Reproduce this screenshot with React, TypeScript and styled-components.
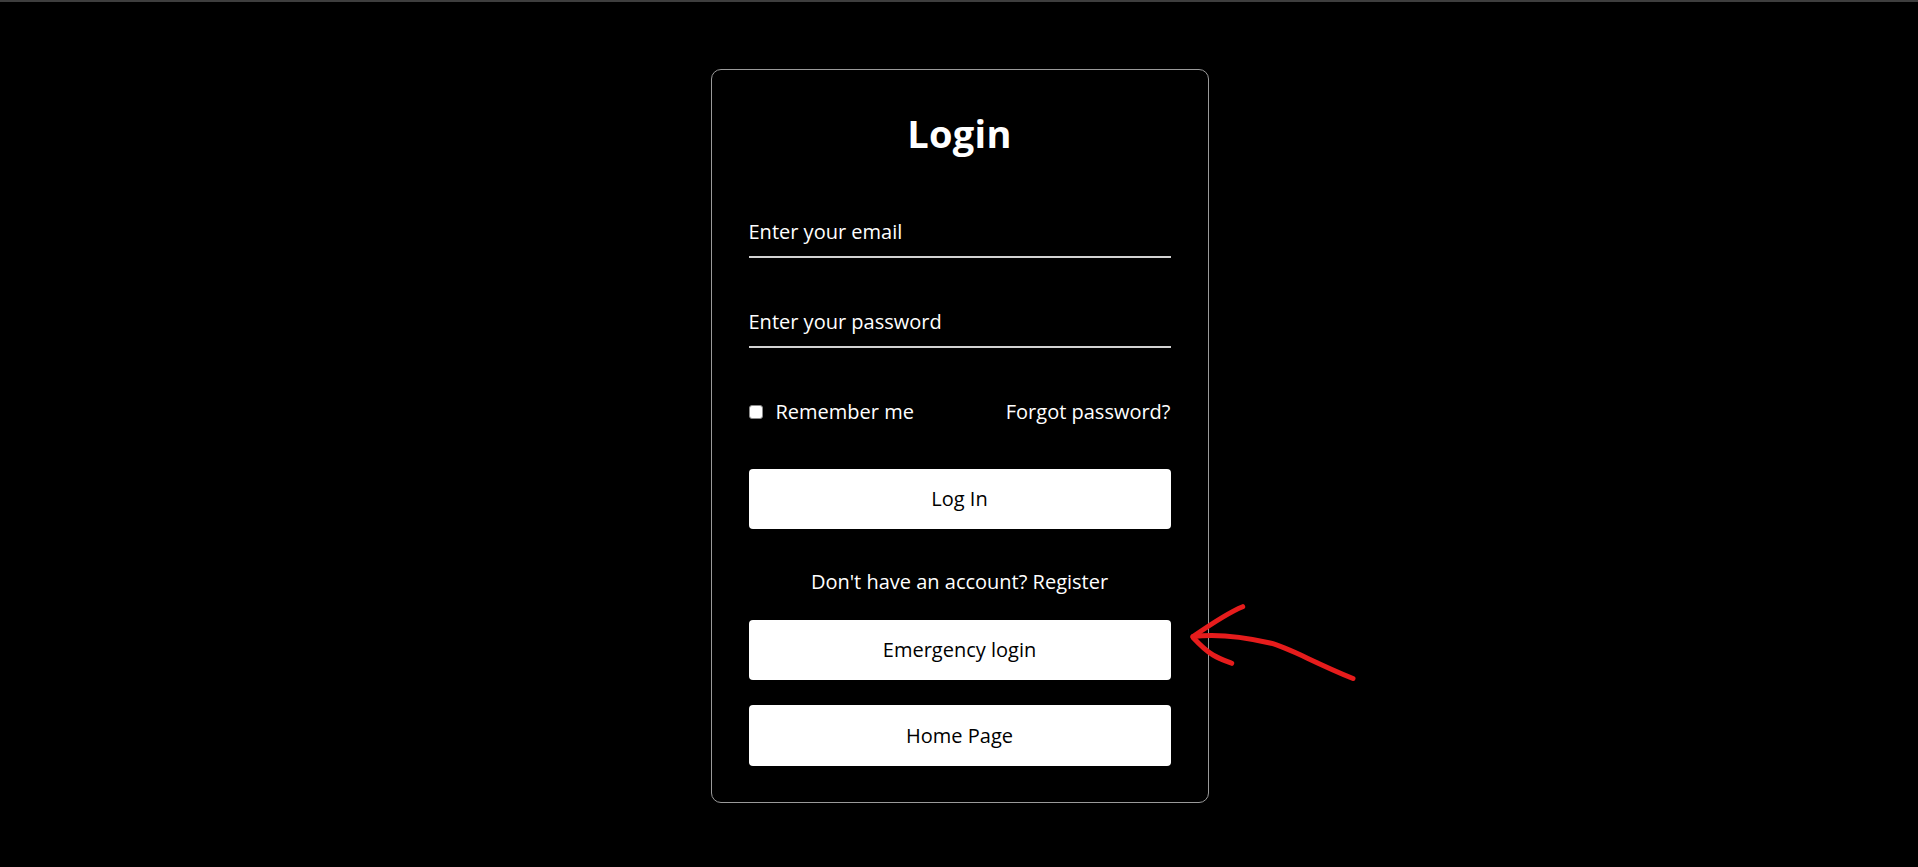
import React, { useState } from 'react';
import styled, { createGlobalStyle } from 'styled-components';

const GlobalStyle = createGlobalStyle`
  html, body {
    margin: 0;
    padding: 0;
    background: #000;
    font-family: 'Open Sans', 'Liberation Sans', sans-serif;
    color: #fff;
  }
  * {
    box-sizing: border-box;
  }
`;

export default function App() {
  const [remember, setRemember] = useState(false);

  return (
    <Page>
      <GlobalStyle />
      <TopBar />
      <Center>
        <Card>
          <Title>Login</Title>
          <Form onSubmit={(e) => e.preventDefault()}>
            <Field type="email" placeholder="Enter your email" />
            <Field type="password" placeholder="Enter your password" $spaced />
            <OptionsRow>
              <RememberLabel>
                <Check type="checkbox" checked={remember} onChange={() => setRemember(!remember)} />
                Remember me
              </RememberLabel>
              <TextLink href="#">Forgot password?</TextLink>
            </OptionsRow>
            <ActionButton type="submit" $top={43.5}>
              Log In
            </ActionButton>
            <RegisterLine>
              Don't have an account? <TextLink href="#">Register</TextLink>
            </RegisterLine>
            <ActionButton type="button" $top={25}>
              Emergency login
            </ActionButton>
            <ActionButton type="button" $top={25}>
              Home Page
            </ActionButton>
          </Form>
        </Card>
      </Center>
      <Annotation viewBox="0 0 1918 867">
        <path d="M1242.7 606.7 C1232 611 1214 622 1193 636.5" />
        <path d="M1193 637.5 C1201 646 1206 651 1213 655 C1220 659 1226 661 1231.7 663.3" />
        <path d="M1193 636.5 C1214 634 1240 636 1270 643 C1290 648 1310 661 1353 678.5" />
      </Annotation>
    </Page>
  );
}

const Page = styled.div`
  position: relative;
  width: 100%;
  min-height: 867px;
  background: #000;
`;

const TopBar = styled.div`
  height: 2px;
  background: #3e3e3e;
`;

const Center = styled.div`
  display: flex;
  justify-content: center;
  padding-top: 67px;
`;

const Card = styled.div`
  width: 498px;
  margin-left: 1px;
  border: 1px solid #9a9a9a;
  border-radius: 10px;
  padding: 39px 37px 36px;
  display: flex;
  flex-direction: column;
`;

const Title = styled.h2`
  margin: 0;
  font-size: 38px;
  line-height: 48px;
  font-weight: 700;
  letter-spacing: 0.3px;
  text-align: center;
  color: #fff;
`;

const Form = styled.form`
  display: flex;
  flex-direction: column;
  margin-top: 50px;
`;

const Field = styled.input<{ $spaced?: boolean }>`
  display: block;
  width: 100%;
  height: 51px;
  margin: ${(p) => (p.$spaced ? '39px' : '0')} 0 0;
  padding: 0;
  background: transparent;
  border: none;
  border-bottom: 2px solid #d2d2d2;
  color: #fff;
  font-family: inherit;
  font-size: 20px;
  outline: none;

  &::placeholder {
    color: #fff;
    opacity: 1;
  }
`;

const OptionsRow = styled.div`
  display: flex;
  justify-content: space-between;
  align-items: center;
  margin-top: 50px;
  font-size: 20px;
  line-height: 27px;
`;

const RememberLabel = styled.label`
  display: flex;
  align-items: center;
  gap: 13px;
  color: #fff;
`;

const Check = styled.input`
  appearance: none;
  width: 14px;
  height: 14px;
  margin: 0;
  background: #fff;
  border: 1px solid #8a8a8a;
  border-radius: 3px;

  &:checked {
    background: #0b57d0;
    border-color: #0b57d0;
  }
`;

const TextLink = styled.a`
  color: #fff;
  text-decoration: none;
`;

const ActionButton = styled.button<{ $top: number }>`
  display: flex;
  align-items: center;
  justify-content: center;
  width: 100%;
  height: 60.5px;
  margin-top: ${(p) => p.$top}px;
  border: none;
  border-radius: 4px;
  background: #fff;
  color: #000;
  font-family: inherit;
  font-size: 20px;
  cursor: pointer;
`;

const RegisterLine = styled.p`
  margin: 38.5px 0 0;
  font-size: 20px;
  line-height: 27px;
  text-align: center;
  color: #fff;
`;

const Annotation = styled.svg`
  position: absolute;
  top: 0;
  left: 0;
  width: 1918px;
  height: 867px;
  pointer-events: none;
  fill: none;
  stroke: #e61c1c;
  stroke-width: 5;
  stroke-linecap: round;
  stroke-linejoin: round;
`;
